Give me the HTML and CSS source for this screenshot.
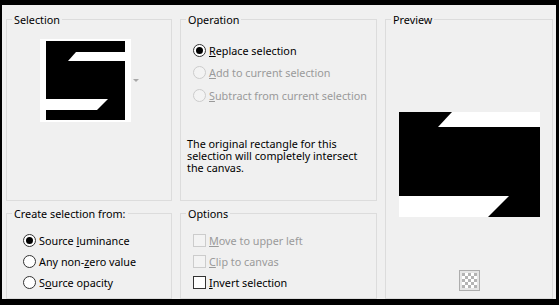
FILE: index.html
```html
<html>

<head>
    <meta http-equiv="Content-Type" content="text/html; charset=UTF-8">
    <link rel="stylesheet" href="styles.css">
</head>

<body>
    <div class="frame">
        <div class="dialog">
            <section class="group selection">
                <span class="group-title">Selection</span>
                <div class="thumb-row">
                    <svg class="thumb" width="91" height="83" viewBox="0 0 91 83">
                        <rect x="0" y="0" width="91" height="83" fill="#ffffff" />
                        <rect x="6" y="2" width="79" height="79" fill="#000000" />
                        <polygon points="36,13 91,13 91,22 28,22" fill="#ffffff" />
                        <polygon points="0,60 68,60 57,71 0,71" fill="#ffffff" />
                    </svg>
                    <span class="drop-arrow"></span>
                </div>
            </section>

            <section class="group operation">
                <span class="group-title">Operation</span>
                <div class="option-list">
                    <label class="option">
                        <span class="radio checked"></span>
                        <span><u>R</u>eplace selection</span>
                    </label>
                    <label class="option disabled">
                        <span class="radio"></span>
                        <span><u>A</u>dd to current selection</span>
                    </label>
                    <label class="option disabled">
                        <span class="radio"></span>
                        <span><u>S</u>ubtract from current selection</span>
                    </label>
                </div>
                <p class="message">The original rectangle for this selection will completely intersect the canvas.</p>
            </section>

            <section class="group preview">
                <span class="group-title">Preview</span>
                <svg class="preview-image" width="141" height="105" viewBox="0 0 141 105">
                    <rect x="0" y="0" width="141" height="105" fill="#000000" />
                    <polygon points="53,0 141,0 141,15 39,15" fill="#ffffff" />
                    <polygon points="0,84 110,84 89,105 0,105" fill="#ffffff" />
                </svg>
                <svg class="checker" width="21" height="21" viewBox="0 0 21 21">
                    <rect x="0.5" y="0.5" width="20" height="20" fill="#e6e6e6" stroke="#adadad" />
                    <rect x="3" y="3" width="15" height="15" fill="#ffffff" />
                    <rect x="3" y="3" width="3" height="3" fill="#b4b4b4" />
                    <rect x="9" y="3" width="3" height="3" fill="#b4b4b4" />
                    <rect x="15" y="3" width="3" height="3" fill="#b4b4b4" />
                    <rect x="6" y="6" width="3" height="3" fill="#b4b4b4" />
                    <rect x="12" y="6" width="3" height="3" fill="#b4b4b4" />
                    <rect x="3" y="9" width="3" height="3" fill="#b4b4b4" />
                    <rect x="9" y="9" width="3" height="3" fill="#b4b4b4" />
                    <rect x="15" y="9" width="3" height="3" fill="#b4b4b4" />
                    <rect x="6" y="12" width="3" height="3" fill="#b4b4b4" />
                    <rect x="12" y="12" width="3" height="3" fill="#b4b4b4" />
                    <rect x="3" y="15" width="3" height="3" fill="#b4b4b4" />
                    <rect x="9" y="15" width="3" height="3" fill="#b4b4b4" />
                    <rect x="15" y="15" width="3" height="3" fill="#b4b4b4" />
                </svg>
            </section>

            <section class="group create">
                <span class="group-title">Create selection from:</span>
                <div class="option-list compact">
                    <label class="option">
                        <span class="radio checked"></span>
                        <span>Source <u>l</u>uminance</span>
                    </label>
                    <label class="option">
                        <span class="radio"></span>
                        <span>Any non-<u>z</u>ero value</span>
                    </label>
                    <label class="option">
                        <span class="radio"></span>
                        <span>S<u>o</u>urce opacity</span>
                    </label>
                </div>
            </section>

            <section class="group options">
                <span class="group-title">Options</span>
                <div class="option-list compact">
                    <label class="option disabled">
                        <span class="checkbox"></span>
                        <span><u>M</u>ove to upper left</span>
                    </label>
                    <label class="option disabled">
                        <span class="checkbox"></span>
                        <span><u>C</u>lip to canvas</span>
                    </label>
                    <label class="option">
                        <span class="checkbox"></span>
                        <span><u>I</u>nvert selection</span>
                    </label>
                </div>
            </section>
        </div>
    </div>
</body>

</html>
```

FILE: styles.css
```css
* {
    box-sizing: border-box;
}

body {
    margin: 0;
    background: #000000;
}

.frame {
    width: 559px;
    height: 305px;
    border-style: solid;
    border-color: #000000;
    border-width: 5px 3px 6px 2px;
    background: #f0f0f0;
    font-family: "Noto Sans", sans-serif;
    font-size: 10.8px;
    color: #000000;
}

.dialog {
    display: grid;
    grid-template-columns: 166px 197px 168px;
    grid-template-rows: 182px 86px;
    column-gap: 8px;
    row-gap: 12px;
    padding: 14px 3px 0 4px;
}

.group {
    position: relative;
    border: 1px solid #dcdcdc;
}

.group-title {
    position: absolute;
    top: -7px;
    left: 5px;
    padding: 0 2px;
    line-height: 14px;
    background: #f0f0f0;
}

.preview {
    grid-row: 1 / 3;
    grid-column: 3;
    display: flex;
    flex-direction: column;
    align-items: center;
    padding-top: 92px;
}

.checker {
    margin-top: 53px;
}

/* selection thumbnail */

.thumb-row {
    display: flex;
    align-items: center;
    padding: 19px 0 0 33px;
}

.thumb {
    display: block;
}

.drop-arrow {
    margin-left: 2px;
    width: 0;
    height: 0;
    border-left: 3px solid transparent;
    border-right: 3px solid transparent;
    border-top: 3px solid #a8a8a8;
}

/* radio and check lists */

.option-list {
    padding: 19px 0 0 12px;
}

.option-list.compact {
    padding: 15.5px 0 0 16px;
}

.options .option-list.compact {
    padding-left: 12px;
}

.option {
    display: flex;
    align-items: center;
    height: 22.5px;
}

.compact .option {
    height: 21px;
}

.option.disabled {
    color: #9a9a9a;
}

.radio {
    position: relative;
    width: 13px;
    height: 13px;
    margin-right: 3px;
    border: 1px solid #333333;
    border-radius: 50%;
    background: #ffffff;
}

.radio.checked::after {
    content: "";
    position: absolute;
    top: 2px;
    left: 2px;
    width: 7px;
    height: 7px;
    border-radius: 50%;
    background: #000000;
}

.disabled .radio {
    border-color: #cccccc;
    background: #f3f3f3;
}

.checkbox {
    width: 13px;
    height: 13px;
    margin-right: 3px;
    border: 1px solid #333333;
    background: #ffffff;
}

.disabled .checkbox {
    border-color: #cccccc;
    background: #f3f3f3;
}

.message {
    margin: 31.5px 10px 0 6px;
    line-height: 12px;
}
```
